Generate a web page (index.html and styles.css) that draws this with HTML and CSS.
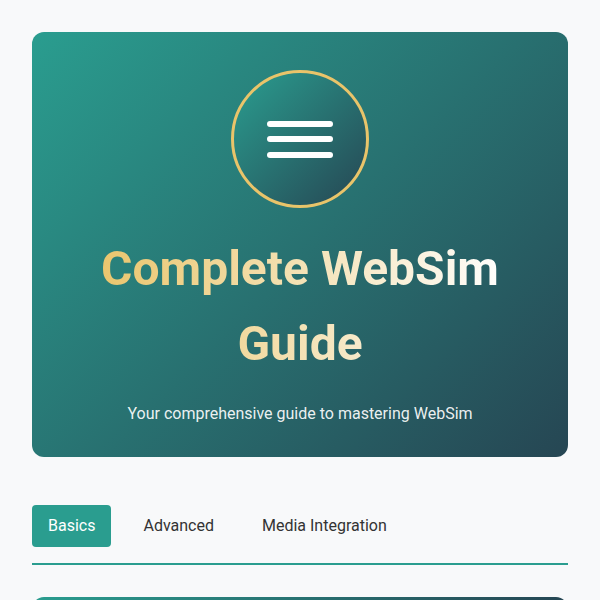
FILE: index.html
```html
<!DOCTYPE html>
<html lang="en">
<head>
<meta charset="utf-8">
<title>Complete WebSim Guide</title>
<link rel="stylesheet" href="styles.css">
</head>
<body>
<main class="page">
  <header class="hero">
    <div class="hero-icon">
      <span class="bar"></span>
      <span class="bar"></span>
      <span class="bar"></span>
    </div>
    <h1 class="hero-title">Complete WebSim Guide</h1>
    <p class="hero-sub">Your comprehensive guide to mastering WebSim</p>
  </header>
  <nav class="tabs">
    <button class="tab active">Basics</button>
    <button class="tab">Advanced</button>
    <button class="tab">Media Integration</button>
  </nav>
  <section class="section-card"></section>
</main>
</body>
</html>
```
FILE: styles.css
```css
* { box-sizing: border-box; }
html, body { margin: 0; background: #f8f9fa; }
body { font-family: Roboto, "Liberation Sans", sans-serif; color: #333; }
.page { padding: 32px; }
.hero {
  background: linear-gradient(135deg, #2a9d8f 0%, #264653 100%);
  border-radius: 12px;
  padding: 38px 32px 31px;
  display: flex;
  flex-direction: column;
  align-items: center;
  text-align: center;
}
.hero-icon {
  width: 138px;
  height: 138px;
  border-radius: 50%;
  border: 3px solid #e9c46a;
  background: linear-gradient(135deg, #2a9d8f 0%, #264653 100%);
  display: flex;
  flex-direction: column;
  align-items: center;
  justify-content: center;
  gap: 9.5px;
  margin-bottom: 24px;
}
.bar {
  display: block;
  width: 66px;
  height: 6px;
  border-radius: 3px;
  background: #fff;
}
.hero-title {
  margin: 0;
  font-size: 48px;
  font-weight: 700;
  line-height: 74.5px;
  background: linear-gradient(90deg, #e9c46a 0%, #ffffff 100%);
  -webkit-background-clip: text;
  background-clip: text;
  color: transparent;
  max-width: 420px;
}
.hero-sub {
  margin: 21px 0 0;
  font-size: 16px;
  line-height: 24px;
  color: rgba(255,255,255,0.92);
}
.tabs {
  margin-top: 48px;
  display: flex;
  gap: 16px;
  padding-bottom: 16px;
  border-bottom: 2px solid #2a9d8f;
}
.tab {
  font-family: Roboto, "Liberation Sans", sans-serif;
  font-size: 16px;
  line-height: 18px;
  padding: 12px 16px;
  border: 0;
  border-radius: 4px;
  background: transparent;
  color: #333;
}
.tab.active { background: #2a9d8f; color: #fff; }
.section-card {
  margin-top: 32px;
  height: 200px;
  border-radius: 12px;
  background: linear-gradient(90deg, #2a9d8f 0%, #264653 100%);
}
```
